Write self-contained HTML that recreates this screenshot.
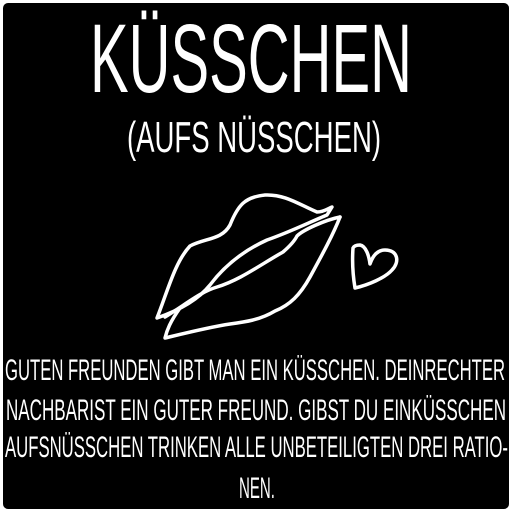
<!DOCTYPE html>
<html><head><style>
html,body{margin:0;padding:0;background:#fff;width:512px;height:512px;overflow:hidden}
</style></head><body>
<svg width="512" height="512" viewBox="0 0 512 512" xmlns="http://www.w3.org/2000/svg">
<rect x="3" y="3" width="506" height="506" rx="5" fill="#000"/>
<g fill="#fff" font-family="Liberation Sans, sans-serif">
<text x="90" y="92" font-size="97" textLength="322" lengthAdjust="spacingAndGlyphs">KÜSSCHEN</text>
<text x="127" y="152" font-size="44" textLength="254" lengthAdjust="spacingAndGlyphs">(AUFS NÜSSCHEN)</text>
<text x="5" y="380" font-size="30" textLength="500" lengthAdjust="spacingAndGlyphs">GUTEN FREUNDEN GIBT MAN EIN KÜSSCHEN. DEINRECHTER</text>
<text x="6" y="420" font-size="30" textLength="500" lengthAdjust="spacingAndGlyphs">NACHBARIST EIN GUTER FREUND.  GIBST DU EINKÜSSCHEN</text>
<text x="5" y="457" font-size="30" textLength="503" lengthAdjust="spacingAndGlyphs">AUFSNÜSSCHEN TRINKEN ALLE UNBETEILIGTEN DREI RATIO-</text>
<text x="239" y="498" font-size="30" textLength="36" lengthAdjust="spacingAndGlyphs">NEN.</text>
</g>
<g fill="none" stroke="#fff" stroke-width="3.5" stroke-linecap="round" stroke-linejoin="round">
<path d="M157,318 C168,290 175,262 190,246 C205,238 222,240 230,225 C238,205 245,197 265,195 C285,194 300,205 317,212 C324,212 329,208 332,207 L327,215 C310,222 290,232 267,240 C245,250 225,265 210,285 C198,300 180,310 157,318 Z"/>
<path d="M165,317 C185,305 200,292 217,287 C240,280 260,265 283,252 C290,246 295,240 297,236 C303,230 325,220 340,217"/>
<path d="M340,217 C333,235 322,255 310,277 C300,295 290,305 275,311 C260,320 245,322 230,324 C210,327 190,332 165,338 C167,330 170,322 180,308"/>
<path d="M353,248 C352,262 353,276 355,288 C368,285 385,278 392,270 C400,262 398,250 385,250 C376,250 372,258 370,264 C369,256 366,246 360,245 C357,245 354,246 353,248 Z"/>
</g>
</svg>
</body></html>
